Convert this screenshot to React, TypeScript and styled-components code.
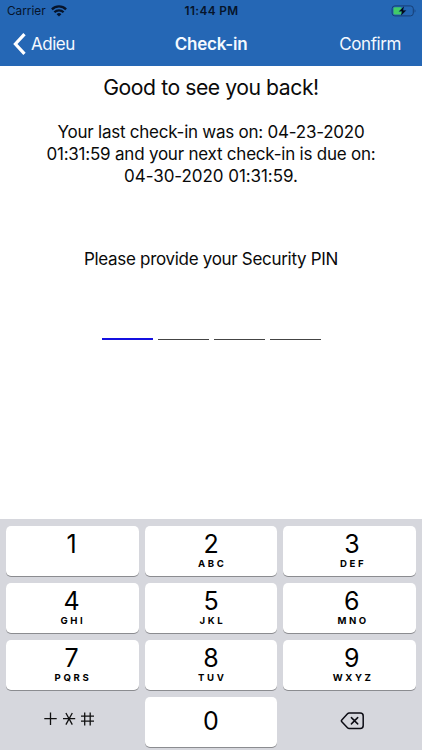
import React from 'react';
import styled, { createGlobalStyle } from 'styled-components';

const GlobalStyle = createGlobalStyle`
  * { box-sizing: border-box; }
  body {
    margin: 0;
    background: #fff;
    color: #0a0a0a;
    font-family: Inter, 'Liberation Sans', sans-serif;
  }
`;

const Screen = styled.div`
  width: 422px;
  height: 750px;
  display: flex;
  flex-direction: column;
  overflow: hidden;
  background: #fff;
`;

const Header = styled.header`
  height: 65.5px;
  flex: none;
  background: #2567b5;
`;

const StatusBar = styled.div`
  height: 22px;
  padding: 0 6px 0 7px;
  display: grid;
  grid-template-columns: 1fr auto 1fr;
  align-items: center;
  color: #06142b;
  font-size: 11.8px;
  line-height: 22px;
`;

const Carrier = styled.div`
  display: flex;
  align-items: center;
  gap: 5px;
`;

const Clock = styled.div`
  font-weight: 600;
  letter-spacing: 0.38px;
`;

const BatterySlot = styled.div`
  display: flex;
  justify-content: flex-end;
`;

const NavBar = styled.nav`
  height: 43px;
  padding: 0 21px 0 13px;
  display: grid;
  grid-template-columns: 1fr auto 1fr;
  align-items: center;
  color: #f4f9ff;
  font-size: 17px;
  line-height: 42px;
`;

const BackButton = styled.div`
  display: flex;
  align-items: center;
  gap: 5px;
  letter-spacing: -0.5px;
`;

const NavTitle = styled.div`
  padding-left: 8px;
  font-weight: 600;
  letter-spacing: -0.22px;
`;

const ConfirmButton = styled.div`
  text-align: right;
  letter-spacing: -0.4px;
`;

const Content = styled.main`
  flex: 1;
  display: flex;
  flex-direction: column;
  align-items: center;
  padding-top: 8.5px;
`;

const Greeting = styled.h1`
  margin: 0;
  font-size: 21.2px;
  font-weight: 400;
  line-height: 26px;
  letter-spacing: -0.45px;
`;

const Message = styled.div`
  margin-top: 20.9px;
  text-align: center;
`;

const Line = styled.div<{ $tracking: number }>`
  font-size: 17px;
  line-height: 22.2px;
  letter-spacing: ${(p) => p.$tracking}px;
  white-space: nowrap;
`;

const Prompt = styled.div`
  margin-top: 60.6px;
`;

const PinRow = styled.div`
  margin-top: 68px;
  display: flex;
  align-items: flex-end;
  gap: 5px;
`;

const PinSlot = styled.div<{ $active?: boolean }>`
  width: 51px;
  height: ${(p) => (p.$active ? 2 : 1.5)}px;
  background: ${(p) => (p.$active ? '#1410e0' : '#444')};
`;

const Keyboard = styled.section`
  height: 231px;
  flex: none;
  padding: 6.5px 6.4px 3px;
  display: grid;
  grid-template-columns: 132.5px 132.5px 132.5px;
  grid-auto-rows: 50px;
  justify-content: space-between;
  row-gap: 7px;
  background: #d6d7dd;
`;

const Key = styled.div<{ $shift?: number; $single?: boolean }>`
  display: flex;
  flex-direction: column;
  align-items: center;
  padding-top: ${(p) => (p.$single ? 11 : 5.5)}px;
  border-radius: 5px;
  background: #fff;
  color: #000;
  box-shadow: 0 1px 0 #8b8c90;
  text-indent: ${(p) => p.$shift ?? 0}px;
`;

const Digit = styled.div`
  font-size: 25px;
  line-height: 26px;
`;

const Letters = styled.div`
  margin-top: 1.6px;
  padding-left: 2.6px;
  font-size: 9.6px;
  font-weight: 700;
  line-height: 10px;
  letter-spacing: 2.6px;
`;

const PlainKey = styled.div<{ $left: number; $top: number }>`
  padding: ${(p) => p.$top}px 0 0 ${(p) => p.$left}px;
  svg { display: block; }
`;

const WifiIcon = () => (
  <svg width="16" height="12" viewBox="0 0 16 12" fill="none" stroke="#06142b" strokeWidth="2.3">
    <path d="M0.9 4.3a10.2 10.2 0 0 1 14.2 0" />
    <path d="M3.4 7.2a6.5 6.5 0 0 1 9.2 0" />
    <path d="M8 11.6 5.6 9.2a3.4 3.4 0 0 1 4.8 0z" fill="#06142b" stroke="none" />
  </svg>
);

const BatteryIcon = () => (
  <svg width="25" height="12" viewBox="0 0 25 12">
    <rect x="1.1" y="0.9" width="21.2" height="10" rx="2.8" fill="none" stroke="#173f76" />
    <path d="M23.6 4.2c1.1.4 1.1 3 0 3.4z" fill="#173f76" />
    <rect x="2.5" y="2.3" width="8.2" height="7.2" rx="1.3" fill="#42cb68" />
    <path d="M13.2 0.9 7.8 6.6h3.1L9.7 11l5.7-5.8h-3.2z" fill="#020812" stroke="#2567b5" strokeWidth="0.3" />
  </svg>
);

const ChevronIcon = () => (
  <svg width="13" height="22" viewBox="0 0 13 22" fill="none" stroke="#fff" strokeWidth="3.2">
    <path d="M11.5 1.1 2.4 11l9.1 9.9" />
  </svg>
);

const SymbolsIcon = () => (
  <svg width="52" height="16" viewBox="0 0 52 16" fill="none" stroke="#111" strokeWidth="1.3">
    <path d="M1.3 7.7h12.4M7.5 1.5v12.4" />
    <path d="M20 7.7h12.2M22.9 2l6.4 11.6M29.3 2l-6.4 11.6" />
    <path d="M38 5.2h13M38 10.2h13M41.7 1.4v13.1M47.2 1.4v13.1" />
  </svg>
);

const DeleteIcon = () => (
  <svg width="25" height="18" viewBox="0 0 25 18" fill="none" stroke="#0c0c14" strokeWidth="1.5" strokeLinejoin="round" strokeLinecap="round">
    <path d="M9.2 1.1h11a3 3 0 0 1 3 3v9.3a3 3 0 0 1-3 3h-11a2.4 2.4 0 0 1-1.7-.7L1.8 9.7a1.3 1.3 0 0 1 0-1.8l5.7-6.1a2.4 2.4 0 0 1 1.7-.7z" />
    <path d="m11.4 5.6 6.3 6.3M17.7 5.6l-6.3 6.3" />
  </svg>
);

const keys = [
  ['1', ''], ['2', 'ABC'], ['3', 'DEF'],
  ['4', 'GHI'], ['5', 'JKL'], ['6', 'MNO'],
  ['7', 'PQRS'], ['8', 'TUV'], ['9', 'WXYZ'],
];

const columnShift = [-2, 0, 5];

export default function App() {
  return (
    <Screen>
      <GlobalStyle />
      <Header>
        <StatusBar>
          <Carrier>Carrier<WifiIcon /></Carrier>
          <Clock>11:44 PM</Clock>
          <BatterySlot><BatteryIcon /></BatterySlot>
        </StatusBar>
        <NavBar>
          <BackButton><ChevronIcon />Adieu</BackButton>
          <NavTitle>Check-in</NavTitle>
          <ConfirmButton>Confirm</ConfirmButton>
        </NavBar>
      </Header>
      <Content>
        <Greeting>Good to see you back!</Greeting>
        <Message>
          <Line $tracking={-0.24}>Your last check-in was on: 04-23-2020</Line>
          <Line $tracking={-0.22}>01:31:59 and your next check-in is due on:</Line>
          <Line $tracking={-0.06}>04-30-2020 01:31:59.</Line>
        </Message>
        <Prompt>
          <Line $tracking={-0.31}>Please provide your Security PIN</Line>
        </Prompt>
        <PinRow>
          <PinSlot $active />
          <PinSlot />
          <PinSlot />
          <PinSlot />
        </PinRow>
      </Content>
      <Keyboard>
        {keys.map(([digit, letters], i) => (
          <Key key={digit} $shift={columnShift[i % 3]}>
            <Digit>{digit}</Digit>
            {letters && <Letters>{letters}</Letters>}
          </Key>
        ))}
        <PlainKey $left={36.6} $top={14.5}><SymbolsIcon /></PlainKey>
        <Key $single><Digit>0</Digit></Key>
        <PlainKey $left={57} $top={15}><DeleteIcon /></PlainKey>
      </Keyboard>
    </Screen>
  );
}
